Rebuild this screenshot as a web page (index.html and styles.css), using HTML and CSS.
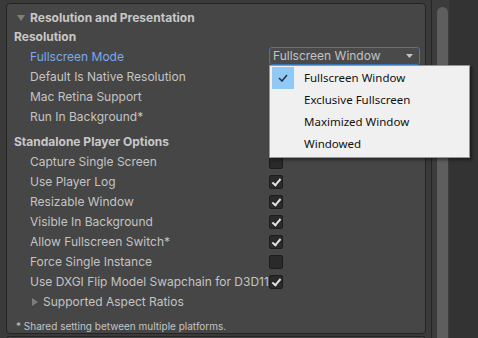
FILE: index.html
```html
<!DOCTYPE html>
<html lang="en">
<head>
    <meta charset="UTF-8">
    <meta name="viewport" content="width=device-width, initial-scale=1.0">
    <title>Player Settings</title>
    <link rel="stylesheet" href="styles.css">
</head>
<body>
    <div class="window">
        <div class="inspector">
            <div class="panel">
                <div class="foldout-header">
                    <span class="tri-down"></span>
                    <span>Resolution and Presentation</span>
                </div>

                <div class="heading">Resolution</div>
                <div class="row item">
                    <div class="label active">Fullscreen Mode</div>
                    <div class="dropdown-wrap">
                        <div class="dropdown">
                            <span>Fullscreen Window</span>
                            <svg class="dd-arrow" width="7" height="4" viewBox="0 0 7 4"><polygon points="0,0 7,0 3.5,4" fill="#c4c4c4"/></svg>
                        </div>
                        <!-- открытое меню выбора режима -->
                        <div class="popup">
                            <div class="popup-item">
                                <span class="popup-check selected">
                                    <svg width="10" height="8" viewBox="0 0 10 8"><polyline points="1,4 4,7 9,1" fill="none" stroke="#2b3540" stroke-width="1.6"/></svg>
                                </span>
                                <span>Fullscreen Window</span>
                            </div>
                            <div class="popup-item">
                                <span class="popup-check"></span>
                                <span>Exclusive Fullscreen</span>
                            </div>
                            <div class="popup-item">
                                <span class="popup-check"></span>
                                <span>Maximized Window</span>
                            </div>
                            <div class="popup-item">
                                <span class="popup-check"></span>
                                <span>Windowed</span>
                            </div>
                        </div>
                    </div>
                </div>
                <div class="row item">
                    <div class="label">Default Is Native Resolution</div>
                    <div class="checkbox checked"></div>
                </div>
                <div class="row item">
                    <div class="label">Mac Retina Support</div>
                    <div class="checkbox checked"></div>
                </div>
                <div class="row item">
                    <div class="label">Run In Background*</div>
                    <div class="checkbox checked"></div>
                </div>

                <div class="heading spaced">Standalone Player Options</div>
                <div class="row item">
                    <div class="label">Capture Single Screen</div>
                    <div class="checkbox"></div>
                </div>
                <div class="row item">
                    <div class="label">Use Player Log</div>
                    <div class="checkbox checked"></div>
                </div>
                <div class="row item">
                    <div class="label">Resizable Window</div>
                    <div class="checkbox checked"></div>
                </div>
                <div class="row item">
                    <div class="label">Visible In Background</div>
                    <div class="checkbox checked"></div>
                </div>
                <div class="row item">
                    <div class="label">Allow Fullscreen Switch*</div>
                    <div class="checkbox checked"></div>
                </div>
                <div class="row item">
                    <div class="label">Force Single Instance</div>
                    <div class="checkbox"></div>
                </div>
                <div class="row item">
                    <div class="label">Use DXGI Flip Model Swapchain for D3D11</div>
                    <div class="checkbox checked"></div>
                </div>
                <div class="row sub-foldout">
                    <span class="tri-right"></span>
                    <span>Supported Aspect Ratios</span>
                </div>

                <div class="footnote">* Shared setting between multiple platforms.</div>
            </div>
            <div class="panel-next"></div>
        </div>
        <div class="divider"></div>
        <div class="scroll">
            <div class="thumb"></div>
        </div>
        <div class="side"></div>
    </div>
</body>
</html>
```

FILE: styles.css
```css
body {
    margin: 0;
    background-color: #383838;
    font-family: Inter, "DejaVu Sans", sans-serif;
    font-size: 12px;
    color: #c4c4c4;
}
.window {
    display: flex;
    width: 478px;
    height: 338px;
    overflow: hidden;
}
.inspector {
    width: 420px;
    padding: 3px 5px 0 6px;
    background-color: #3a3a3a;
}
.panel {
    box-sizing: border-box;
    height: 331px;
    padding-top: 4px;
    background-color: #464646;
    border: 1px solid #242424;
    border-radius: 4px;
}
.panel-next {
    height: 6px;
    margin-top: 2px;
    background-color: #464646;
    border: 1px solid #242424;
    border-bottom: none;
    border-radius: 4px 4px 0 0;
}
.divider {
    width: 1px;
    background-color: #262626;
}
.scroll {
    width: 17px;
    padding-top: 7px;
    background-color: #3c3c3c;
}
.thumb {
    width: 11px;
    height: 340px;
    margin-left: 5px;
    background-color: #5e5e5e;
    border-radius: 6px;
}
.side {
    flex: 1;
    background-color: #333333;
}

/* строки инспектора */
.foldout-header {
    display: flex;
    align-items: center;
    height: 19px;
    line-height: 20px;
    font-weight: bold;
    color: #c8c8c8;
}
.tri-down {
    width: 0;
    height: 0;
    margin: 0 5px 0 10px;
    border-left: 4px solid transparent;
    border-right: 4px solid transparent;
    border-top: 6px solid #7d7d7d;
}
.tri-right {
    width: 0;
    height: 0;
    margin: 0 5px 0 25px;
    border-top: 4px solid transparent;
    border-bottom: 4px solid transparent;
    border-left: 6px solid #7d7d7d;
}
.heading {
    height: 20px;
    line-height: 20px;
    padding-left: 7px;
    font-weight: bold;
    color: #c8c8c8;
}
.heading.spaced {
    margin-top: 5px;
}
.row {
    display: flex;
    align-items: center;
    height: 20px;
    line-height: 20px;
}
.item {
    padding-left: 23px;
}
.label {
    width: 239px;
    flex-shrink: 0;
    white-space: nowrap;
}
.label.active {
    color: #7ba9ec;
}
.checkbox {
    width: 12px;
    height: 12px;
    background-color: #2a2a2a;
    border: 1px solid #1c1c1c;
    border-radius: 2px;
    position: relative;
}
.checkbox.checked::after {
    content: "";
    position: absolute;
    left: 4px;
    top: 1px;
    width: 3px;
    height: 7px;
    border-right: 2px solid #e0e0e0;
    border-bottom: 2px solid #e0e0e0;
    transform: rotate(40deg);
}
.footnote {
    margin-top: 7px;
    padding-left: 9px;
    font-size: 10px;
    line-height: 14px;
    color: #c4c4c4;
}

/* выпадающий список */
.dropdown-wrap {
    position: relative;
    align-self: flex-start;
}
.dropdown {
    display: flex;
    align-items: center;
    justify-content: space-between;
    box-sizing: border-box;
    width: 151px;
    height: 18px;
    padding: 0 6px 0 3px;
    background-color: #4a4a4a;
    border: 1px solid #3a79bb;
    border-radius: 3px;
    line-height: 16px;
}
.popup {
    position: absolute;
    left: 0;
    top: 18px;
    width: 195px;
    padding: 1px 2px 2px;
    background-color: #f0f0f0;
    border: 1px solid #979797;
    box-shadow: 2px 2px 3px rgba(0,0,0,0.45);
    font-family: "Noto Sans", "DejaVu Sans", sans-serif;
    font-size: 11.5px;
    color: #111;
    z-index: 10;
}
.popup-item {
    display: flex;
    align-items: center;
    height: 22px;
}
.popup-check {
    display: flex;
    align-items: center;
    justify-content: center;
    width: 22px;
    height: 22px;
    margin-right: 10px;
}
.popup-check.selected {
    background-color: #90c8f6;
}
```
